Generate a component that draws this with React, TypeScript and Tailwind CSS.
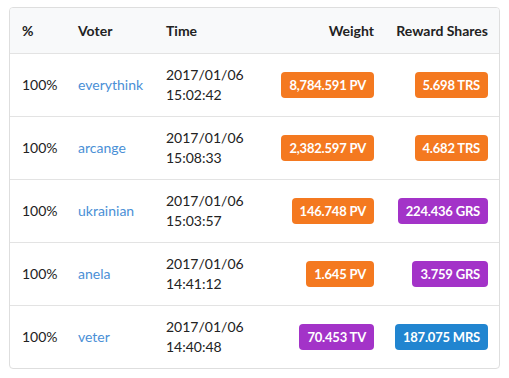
import React from "react";

type Row = {
  voter: string;
  date: string;
  time: string;
  weight: string;
  wColor: string;
  reward: string;
  rColor: string;
};

const ORANGE = "bg-[#f47920]";
const PURPLE = "bg-[#a333c8]";
const BLUE = "bg-[#2185d0]";

const rows: Row[] = [
  { voter: "everythink", date: "2017/01/06", time: "15:02:42", weight: "8,784.591 PV", wColor: ORANGE, reward: "5.698 TRS", rColor: ORANGE },
  { voter: "arcange", date: "2017/01/06", time: "15:08:33", weight: "2,382.597 PV", wColor: ORANGE, reward: "4.682 TRS", rColor: ORANGE },
  { voter: "ukrainian", date: "2017/01/06", time: "15:03:57", weight: "146.748 PV", wColor: ORANGE, reward: "224.436 GRS", rColor: PURPLE },
  { voter: "anela", date: "2017/01/06", time: "14:41:12", weight: "1.645 PV", wColor: ORANGE, reward: "3.759 GRS", rColor: PURPLE },
  { voter: "veter", date: "2017/01/06", time: "14:40:48", weight: "70.453 TV", wColor: PURPLE, reward: "187.075 MRS", rColor: BLUE },
];

function Badge({ text, color }: { text: string; color: string }) {
  return (
    <span className={`${color} inline-flex h-[26px] items-center rounded-[4px] px-[8px] text-[13px] font-bold leading-none tracking-[-0.2px] text-white`}>
      {text}
    </span>
  );
}

export default function App() {
  return (
    <div className="h-[378px] w-[509px] bg-white pt-[7px] pl-[9px]" style={{ fontFamily: "Lato, 'Open Sans', sans-serif" }}>
      <div className="w-[491px] overflow-hidden rounded-[4px] border border-[#dedede] text-[14px] text-[#222]">
        <div className="grid h-[45px] grid-cols-[56px_88px_106px_126px_113px] items-center bg-[#f8f9fa] font-bold leading-5">
          <div className="pl-3">%</div>
          <div className="pl-3">Voter</div>
          <div className="pl-3">Time</div>
          <div className="pr-3 text-right">Weight</div>
          <div className="pr-[11px] text-right">Reward Shares</div>
        </div>
        {rows.map((r) => (
          <div key={r.voter} className="grid grid-cols-[56px_88px_106px_126px_113px] items-center border-t border-[#e3e3e3] leading-5">
            <div className="py-[11px] pl-3">100%</div>
            <div className="py-[11px] pl-3 text-[#4a8fd6]">{r.voter}</div>
            <div className="py-[11px] pl-3">
              <div>{r.date}</div>
              <div>{r.time}</div>
            </div>
            <div className="flex justify-end pr-3">
              <Badge text={r.weight} color={r.wColor} />
            </div>
            <div className="flex justify-end pr-[11px]">
              <Badge text={r.reward} color={r.rColor} />
            </div>
          </div>
        ))}
      </div>
    </div>
  );
}
